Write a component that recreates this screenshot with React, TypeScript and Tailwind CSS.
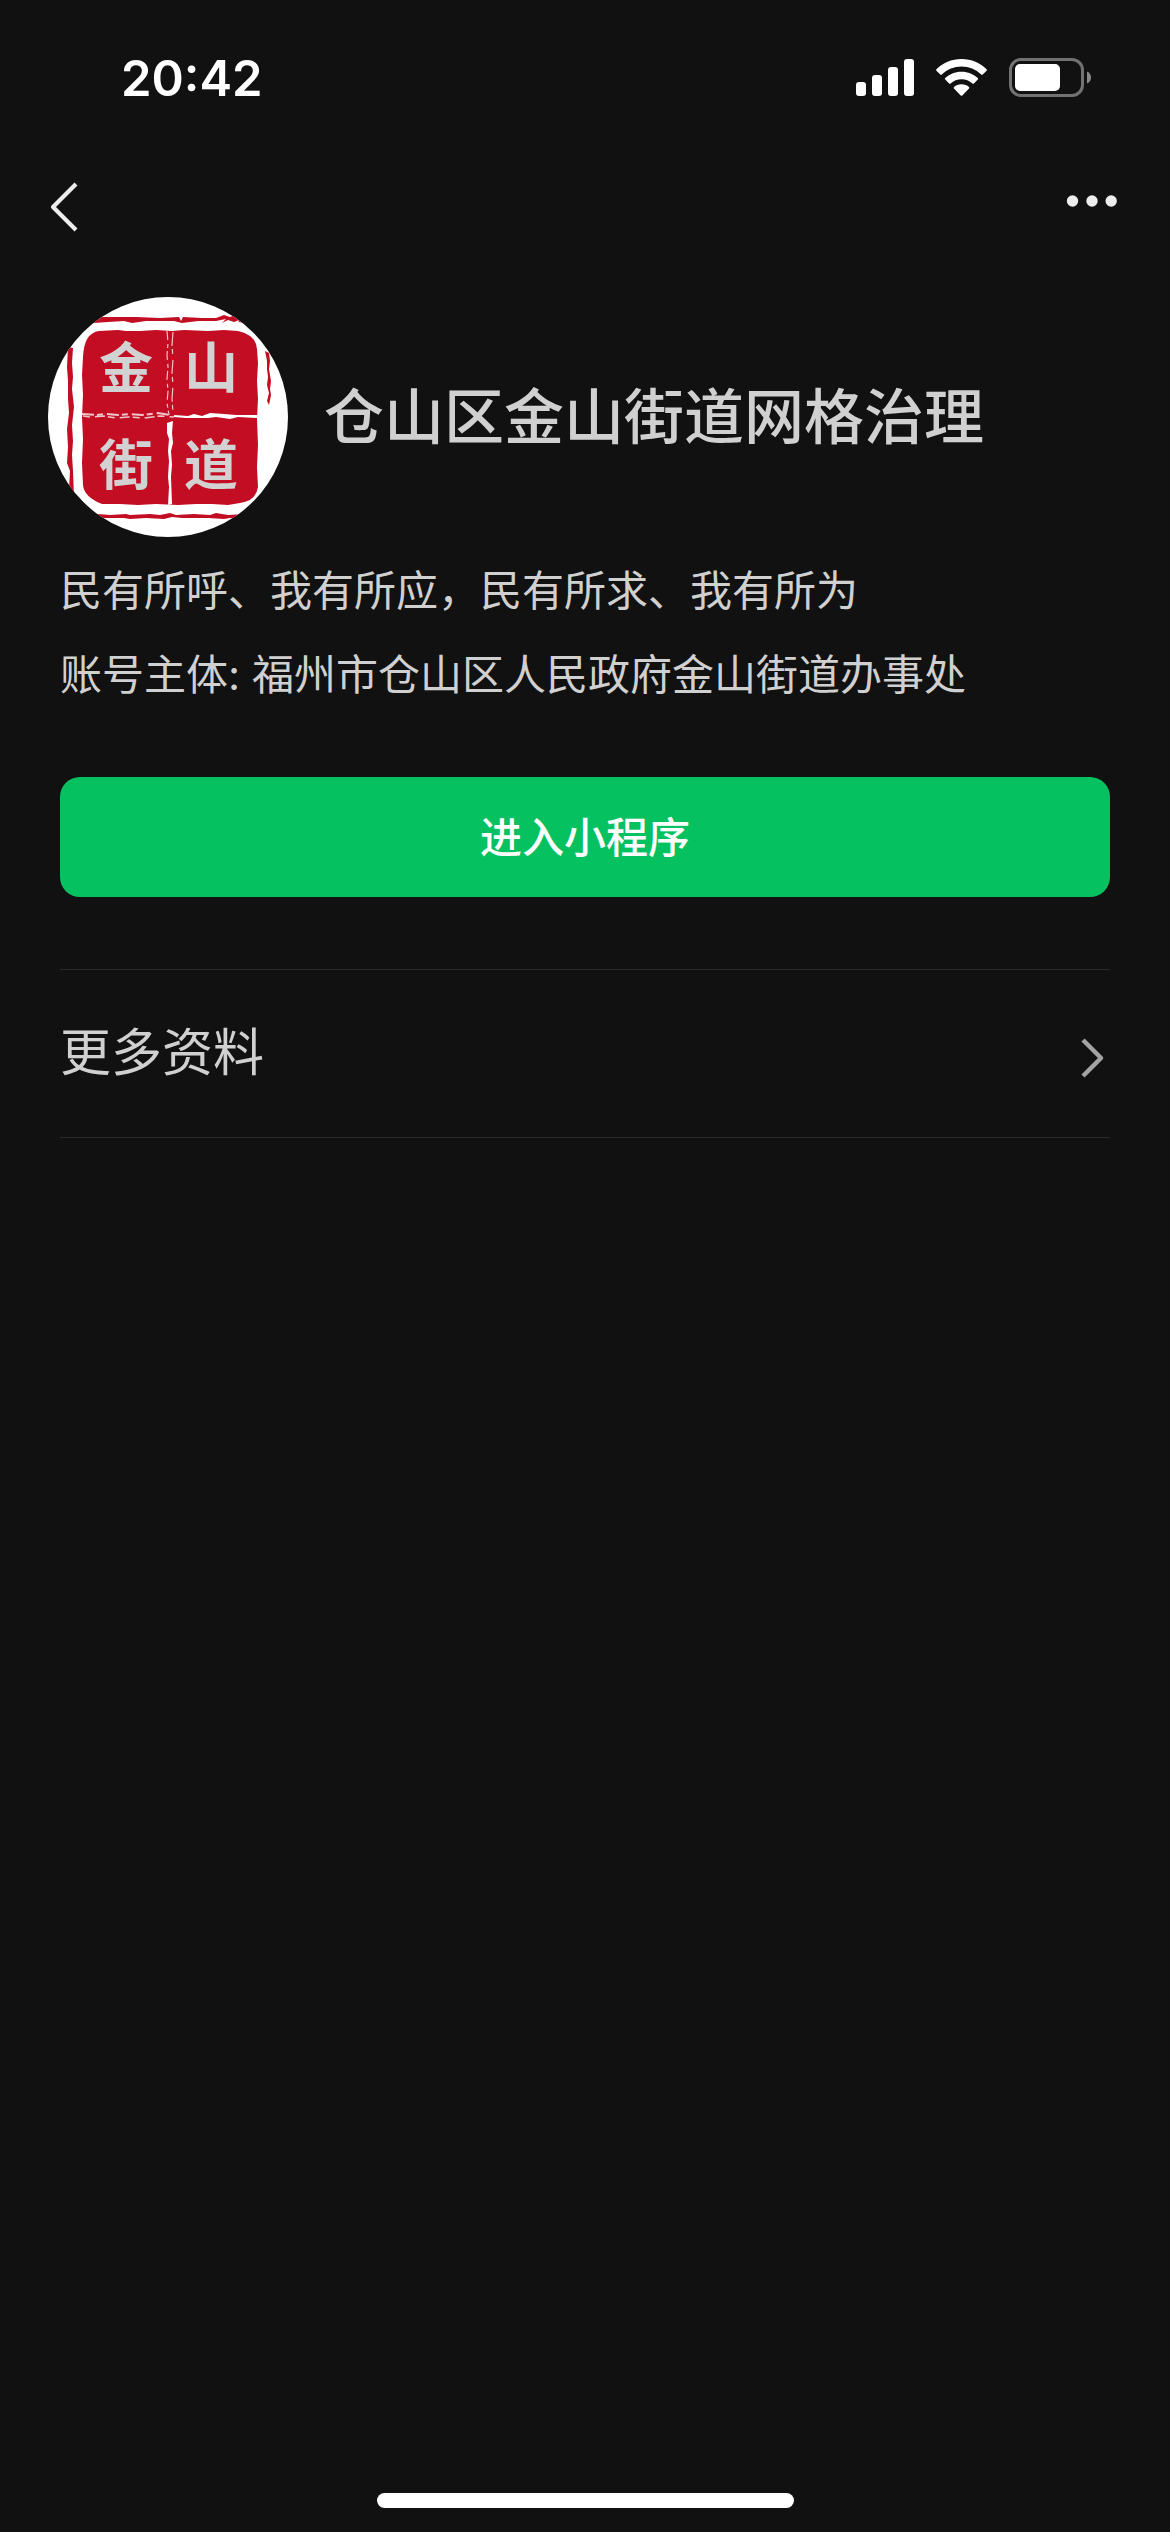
import React from "react";

interface SealCharacter {
  char: string;
  x: number;
  y: number;
}

const sealCharacters: SealCharacter[] = [
  { char: "金", x: 78, y: 91 },
  { char: "山", x: 163, y: 91 },
  { char: "街", x: 78, y: 188 },
  { char: "道", x: 163, y: 188 },
];

const StatusBar: React.FC = () => {
  return (
    <div className="flex h-[156px] items-center justify-between pl-[121px] pr-[78px] text-white">
      <span className="text-[49px] leading-none font-semibold">20:42</span>
      <div className="flex items-center gap-[21px]">
        <svg width="59" height="38" viewBox="0 0 59 38" fill="currentColor">
          <rect x="0" y="23" width="10" height="14" rx="3" />
          <rect x="16" y="16" width="10" height="21" rx="3" />
          <rect x="32" y="8" width="10" height="29" rx="3" />
          <rect x="48" y="0" width="10" height="37" rx="3" />
        </svg>
        <svg width="52" height="38" viewBox="0 0 52 38" fill="currentColor">
          <path d="M25.5 0C35.5 0 44.2 3.8 50.6 10.2Q51.2 11 50.6 11.7L46.7 15.6Q46 16.2 45.2 15.6C39.8 10.4 33 7.6 25.5 7.6S11.2 10.4 5.8 15.6Q5 16.2 4.3 15.6L.4 11.7Q-.2 11 .4 10.2C6.8 3.8 15.5 0 25.5 0Z" />
          <path d="M25.5 12.7C32 12.7 37.7 15.2 41.8 19.1Q42.5 19.8 41.8 20.6L37.9 24.4Q37.2 25.1 36.4 24.4C33.4 21.7 29.7 20.2 25.5 20.2S17.6 21.7 14.6 24.4Q13.8 25.1 13.1 24.4L9.2 20.6Q8.5 19.8 9.2 19.1C13.3 15.2 19 12.7 25.5 12.7Z" />
          <path d="M25.5 25.2C28.5 25.2 31.1 26.2 33 27.9Q33.7 28.6 33 29.4L26.3 36.5Q25.5 37.2 24.7 36.5L18 29.4Q17.3 28.6 18 27.9C19.9 26.2 22.5 25.2 25.5 25.2Z" />
        </svg>
        <svg width="83" height="40" viewBox="0 0 83 40">
          <rect
            x="1.5"
            y="1.5"
            width="72"
            height="36"
            rx="10.5"
            fill="none"
            stroke="#727272"
            strokeWidth="3"
          />
          <rect x="6" y="6" width="45" height="27" rx="5" fill="#ffffff" />
          <path d="M78 13.5C80.8 14.7 82 17 82 19.5S80.8 24.3 78 25.5Z" fill="#8a8a8a" />
        </svg>
      </div>
    </div>
  );
};

const NavBar: React.FC = () => {
  return (
    <nav className="flex h-[102px] items-center justify-between px-12 text-[#ededed]">
      <button type="button" aria-label="返回">
        <svg width="36" height="54" viewBox="0 0 36 54" fill="none">
          <path
            d="M28 4L5 27L28 50"
            stroke="currentColor"
            strokeWidth="4.2"
            strokeLinejoin="round"
          />
        </svg>
      </button>
      <button type="button" aria-label="更多">
        <svg width="56" height="54" viewBox="0 0 56 54" fill="currentColor">
          <circle cx="6.5" cy="21" r="5.7" />
          <circle cx="26" cy="21" r="5.7" />
          <circle cx="45.2" cy="21" r="5.7" />
        </svg>
      </button>
    </nav>
  );
};

const SealAvatar: React.FC = () => {
  return (
    <svg
      className="size-[240px] shrink-0 rounded-full bg-white"
      viewBox="0 0 240 240"
    >
      {/* broken outer frame */}
      <g fill="#c20d23">
        <path d="M44 20L88 20L112 21L131 20L133 24L135 20L154 21L168 21L176 18L182 20L190 17L200 23L198 26L190 25L194 22L186 25L180 23L174 26L178 22L168 24L150 24L134 26L126 24L98 24L84 26L76 24L60 25L46 26Z" />
        <path d="M50 217L62 218L78 217L82 218L102 217L112 218L122 216L128 218L146 217L162 218L168 216L180 218L200 217L198 221L182 221L176 222L160 221L134 221L124 220L116 222L98 221L82 222L76 221L50 221Z" />
        <path d="M20 50L25 51L24 66L25 80L24 92L26 110L24 128L25 144L24 158L25 174L26 200L21 192L22 174L19 166L20 150L19 132L21 116L20 102L20 84L19 70Z" />
        <path d="M217 54L221 56L222 64L221 72L223 84L222 92L223 98L221 108L219 104L221 96L219 88L220 80L219 72L219 64Z" />
      </g>
      <path
        fill="#c20d23"
        d="M51 34L70 33L78 34L92 34L108 33L124 34L136 33L160 34L176 33L190 34Q208 38 209 52L210 66L209 84L210 102L209 122L210 148L209 170L210 190Q208 204 192 206L180 208L164 207L148 207L130 208L108 207L90 208L72 207L54 207Q36 200 35 188L34 166L35 142L34 120L35 98L34 78L35 60Q36 36 51 34Z"
      />
      {/* worn cross between the four characters */}
      <g fill="#ffffff">
        <path d="M126 118L140 119L146 117L154 119L162 116L176 117L188 118L209 118L209 121L190 120L182 122L168 120L160 121L138 121L126 120Z" />
        <path d="M119 126L125 124L124 136L125 146L123 154L124 168L123 180L124 207L120 208L121 190L120 180L121 164L120 154L121 142L119 136Z" />
      </g>
      <g fill="none" stroke="#f0c4c9">
        <path d="M34 117L48 118L58 117L70 118L82 117L94 118L110 116L122 118" strokeWidth="2" strokeDasharray="12 3 6 4" />
        <path d="M35 119L42 120L56 119L68 121L80 120L96 121L112 119L126 120" strokeWidth="1.5" strokeDasharray="7 5 10 3" />
        <path d="M119 34L120 46L119 58L120 70L119 82L120 94L119 106L121 118" strokeWidth="1.2" strokeDasharray="9 4 4 3" />
        <path d="M125 35L124 48L125 62L124 76L125 88L124 102L125 116" strokeWidth="1.2" strokeDasharray="14 3 5 6" />
      </g>
      <g className="text-[54px] font-bold" fill="#d2d2d2" textAnchor="middle">
        {sealCharacters.map((item) => (
          <text key={item.char} x={item.x} y={item.y}>
            {item.char}
          </text>
        ))}
      </g>
    </svg>
  );
};

export default function App() {
  return (
    <div
      lang="zh-CN"
      className="flex min-h-screen flex-col bg-[#111111] font-['Inter','Noto_Sans_CJK_SC',sans-serif] text-[#d0d0d0]"
    >
      <StatusBar />
      <NavBar />

      <main className="flex-1">
        <header className="mt-[39px] flex items-center gap-9 px-12">
          <SealAvatar />
          <h1 className="text-[60px] leading-[84px] font-medium">
            仓山区金山街道网格治理
          </h1>
        </header>

        <div className="mt-3 px-[60px]">
          <div className="text-[42px] leading-[84px]">
            <p>民有所呼、我有所应，民有所求、我有所为</p>
            <p>账号主体: 福州市仓山区人民政府金山街道办事处</p>
          </div>

          <button
            type="button"
            className="mt-[60px] h-[120px] w-full rounded-[20px] bg-[#05c160] text-[42px] font-medium text-white"
          >
            进入小程序
          </button>

          <a
            href="#more"
            className="mt-[72px] flex h-[169px] items-center justify-between border-y border-[#2a2a2a] text-[51px]"
          >
            <span>更多资料</span>
            <svg width="34" height="52" viewBox="0 0 34 52" fill="none">
              <path
                d="M7 12L25 30L7 48"
                stroke="#a3a3a3"
                strokeWidth="4.5"
                strokeLinejoin="round"
              />
            </svg>
          </a>
        </div>
      </main>

      <div className="mx-auto mb-6 h-[15px] w-[417px] rounded-full bg-white" />
    </div>
  );
}
